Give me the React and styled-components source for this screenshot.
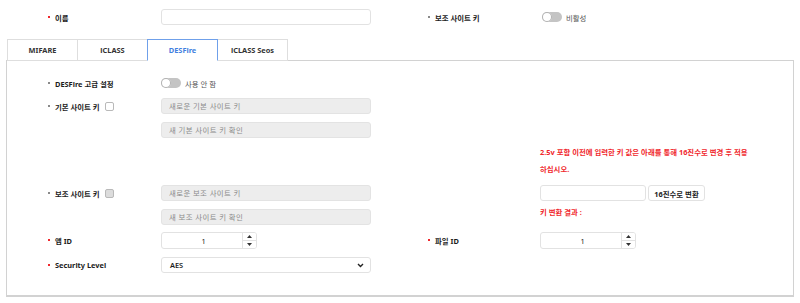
import styled, { createGlobalStyle } from "styled-components";

const GlobalStyle = createGlobalStyle`
	body {
		margin: 0;
		background: #fff;
		font-family: "Noto Sans", "Noto Sans CJK KR", sans-serif;
		font-size: 7.4px;
		color: #1c1c1c;
	}
	* { box-sizing: border-box; }
`;

const Page = styled.div`
	width: 800px;
	height: 303px;
	padding-top: 9px;
	overflow: hidden;
`;

const Row = styled.div`
	display: grid;
	grid-template-columns: 113px 210px 57px 112px 1fr;
	align-items: start;
	margin-top: ${(p) => p.$mt || 0}px;
	padding-left: ${(p) => p.$pl || 0}px;
`;

const Label = styled.div`
	grid-column: ${(p) => (p.$right ? 4 : 1)};
	display: flex;
	align-items: center;
	height: 16px;
	font-weight: 700;
	white-space: nowrap;
	&::before {
		content: "";
		width: 2px;
		height: 2px;
		margin-right: 5px;
		background: ${(p) => (p.$required ? "#f0282d" : "#8a8a8a")};
	}
`;

const Cell = styled.div`
	grid-column: ${(p) => p.$col};
	display: flex;
	flex-direction: ${(p) => (p.$stack ? "column" : "row")};
	gap: ${(p) => (p.$stack ? 8 : 2)}px;
	align-items: ${(p) => (p.$stack ? "stretch" : "center")};
`;

const Check = styled.span`
	width: 9px;
	height: 9px;
	margin-left: 5px;
	border: 1px solid #b9b9b9;
	border-radius: 2px;
	background: ${(p) => (p.$disabled ? "#dcdcdc" : "#fff")};
`;

const Input = styled.input`
	width: ${(p) => p.$w || 210}px;
	height: 16px;
	padding: 0 7px;
	border: 1px solid #e2e2e2;
	border-radius: 3px;
	background: #fff;
	font: inherit;
	color: #222;
	outline: none;
	&:disabled {
		background: #ededed;
		border-color: #e3e3e3;
	}
	&::placeholder {
		color: #8a8a8a;
		letter-spacing: 0.4px;
	}
`;

const ToggleWrap = styled.div`
	display: flex;
	align-items: center;
	height: 16px;
	margin-left: ${(p) => p.$ml || 0}px;
	color: #555;
	gap: 4px;
`;

const Track = styled.span`
	position: relative;
	width: 20px;
	height: 10px;
	border-radius: 5px;
	background: #c4c4c4;
	&::after {
		content: "";
		position: absolute;
		left: 0;
		top: 0;
		width: 10px;
		height: 10px;
		border-radius: 50%;
		background: #fff;
		box-shadow: 0 0 0 1px #b0b0b0 inset;
	}
`;

const Tabs = styled.div`
	display: flex;
	margin: 14px 0 0 8px;
`;

const Tab = styled.div`
	position: relative;
	width: 71px;
	height: 22px;
	display: flex;
	align-items: center;
	justify-content: center;
	font-weight: 700;
	background: #fff;
	color: ${(p) => (p.$active ? "#3f7fe0" : "#333")};
	border: 1px solid ${(p) => (p.$active ? "#6fa0ea" : "#dedede")};
	border-bottom: 1px solid ${(p) => (p.$active ? "#fff" : "#dedede")};
	margin-left: -1px;
	margin-bottom: -1px;
	z-index: ${(p) => (p.$active ? 2 : 1)};
`;

const Panel = styled.div`
	margin: 0 6px;
	height: 237px;
	border: 1px solid #d2d2d2;
	border-bottom-width: 2px;
	padding: 14px 0 0 41px;
`;

const Notice = styled.div`
	grid-column: 5;
	color: #f0282d;
	font-weight: 700;
	line-height: 17px;
	white-space: nowrap;
`;

const Convert = styled.button`
	height: 16px;
	width: 57px;
	padding: 0;
	border: 1px solid #e2e2e2;
	border-radius: 3px;
	background: #fff;
	font: inherit;
	font-weight: 700;
	color: #222;
`;

const Result = styled.div`
	margin-top: 3px;
	line-height: 16px;
	color: #f0282d;
	font-weight: 700;
`;

const Number = styled.div`
	display: flex;
	width: 96px;
	height: 17px;
	border: 1px solid #e2e2e2;
	border-radius: 3px;
	overflow: hidden;
`;

const NumValue = styled.div`
	flex: 1;
	display: flex;
	align-items: center;
	justify-content: center;
	padding-left: 3px;
`;

const Spin = styled.div`
	width: 14px;
	display: flex;
	flex-direction: column;
	border-left: 1px solid #e2e2e2;
`;

const SpinBtn = styled.div`
	flex: 1;
	display: flex;
	align-items: center;
	justify-content: center;
	background: #fff;
	& + & { border-top: 1px solid #e2e2e2; }
`;

const Select = styled.div`
	width: 210px;
	height: 16px;
	display: flex;
	align-items: center;
	justify-content: space-between;
	padding: 0 6px 0 8px;
	border: 1px solid #e2e2e2;
	border-radius: 3px;
	font-weight: 600;
`;

const Arrow = ({ up }) => (
	<svg width="5" height="3" viewBox="0 0 5 3">
		<path d={up ? "M0 3 L2.5 0 L5 3Z" : "M0 0 L2.5 3 L5 0Z"} fill="#333" />
	</svg>
);

const NumberBox = () => (
	<Number>
		<NumValue>1</NumValue>
		<Spin>
			<SpinBtn><Arrow up /></SpinBtn>
			<SpinBtn><Arrow /></SpinBtn>
		</Spin>
	</Number>
);

const Toggle = ({ text, ml }) => (
	<ToggleWrap $ml={ml}>
		<Track />
		<span>{text}</span>
	</ToggleWrap>
);

export default function App() {
	return (
		<>
			<GlobalStyle />
			<Page>
				<Row $pl={48}>
					<Label $required>이름</Label>
					<Cell $col={2}><Input /></Cell>
					<Label $right>보조 사이트 키</Label>
					<Cell $col={5}><Toggle text="비활성" ml={2} /></Cell>
				</Row>
				<Tabs>
					<Tab>MIFARE</Tab>
					<Tab>iCLASS</Tab>
					<Tab $active>DESFire</Tab>
					<Tab>iCLASS Seos</Tab>
				</Tabs>
				<Panel>
					<Row>
						<Label>DESFire 고급 설정</Label>
						<Cell $col={2}><Toggle text="사용 안 함" /></Cell>
					</Row>
					<Row $mt={7}>
						<Label>기본 사이트 키<Check /></Label>
						<Cell $col={2} $stack>
							<Input disabled placeholder="새로운 기본 사이트 키" />
							<Input disabled placeholder="새 기본 사이트 키 확인" />
						</Cell>
					</Row>
					<Row $mt={6}>
						<Notice>
							2.5v 포함 이전에 입력한 키 값은 아래를 통해 16진수로 변경 후 적용
							<br />
							하십시오.
						</Notice>
					</Row>
					<Row $mt={7}>
						<Label>보조 사이트 키<Check $disabled /></Label>
						<Cell $col={2} $stack>
							<Input disabled placeholder="새로운 보조 사이트 키" />
							<Input disabled placeholder="새 보조 사이트 키 확인" />
						</Cell>
						<Cell $col={5} $stack style={{ gap: 0 }}>
							<Cell>
								<Input $w={106} />
								<Convert>16진수로 변환</Convert>
							</Cell>
							<Result>키 변환 결과 :</Result>
						</Cell>
					</Row>
					<Row $mt={7}>
						<Label $required>앱 ID</Label>
						<Cell $col={2}><NumberBox /></Cell>
						<Label $right $required>파일 ID</Label>
						<Cell $col={5}><NumberBox /></Cell>
					</Row>
					<Row $mt={8}>
						<Label $required>Security Level</Label>
						<Cell $col={2}>
							<Select>
								<span>AES</span>
								<svg width="7" height="5" viewBox="0 0 7 5">
									<path d="M1 1 L3.5 3.5 L6 1" fill="none" stroke="#222" strokeWidth="1.4" />
								</svg>
							</Select>
						</Cell>
					</Row>
				</Panel>
			</Page>
		</>
	);
}
